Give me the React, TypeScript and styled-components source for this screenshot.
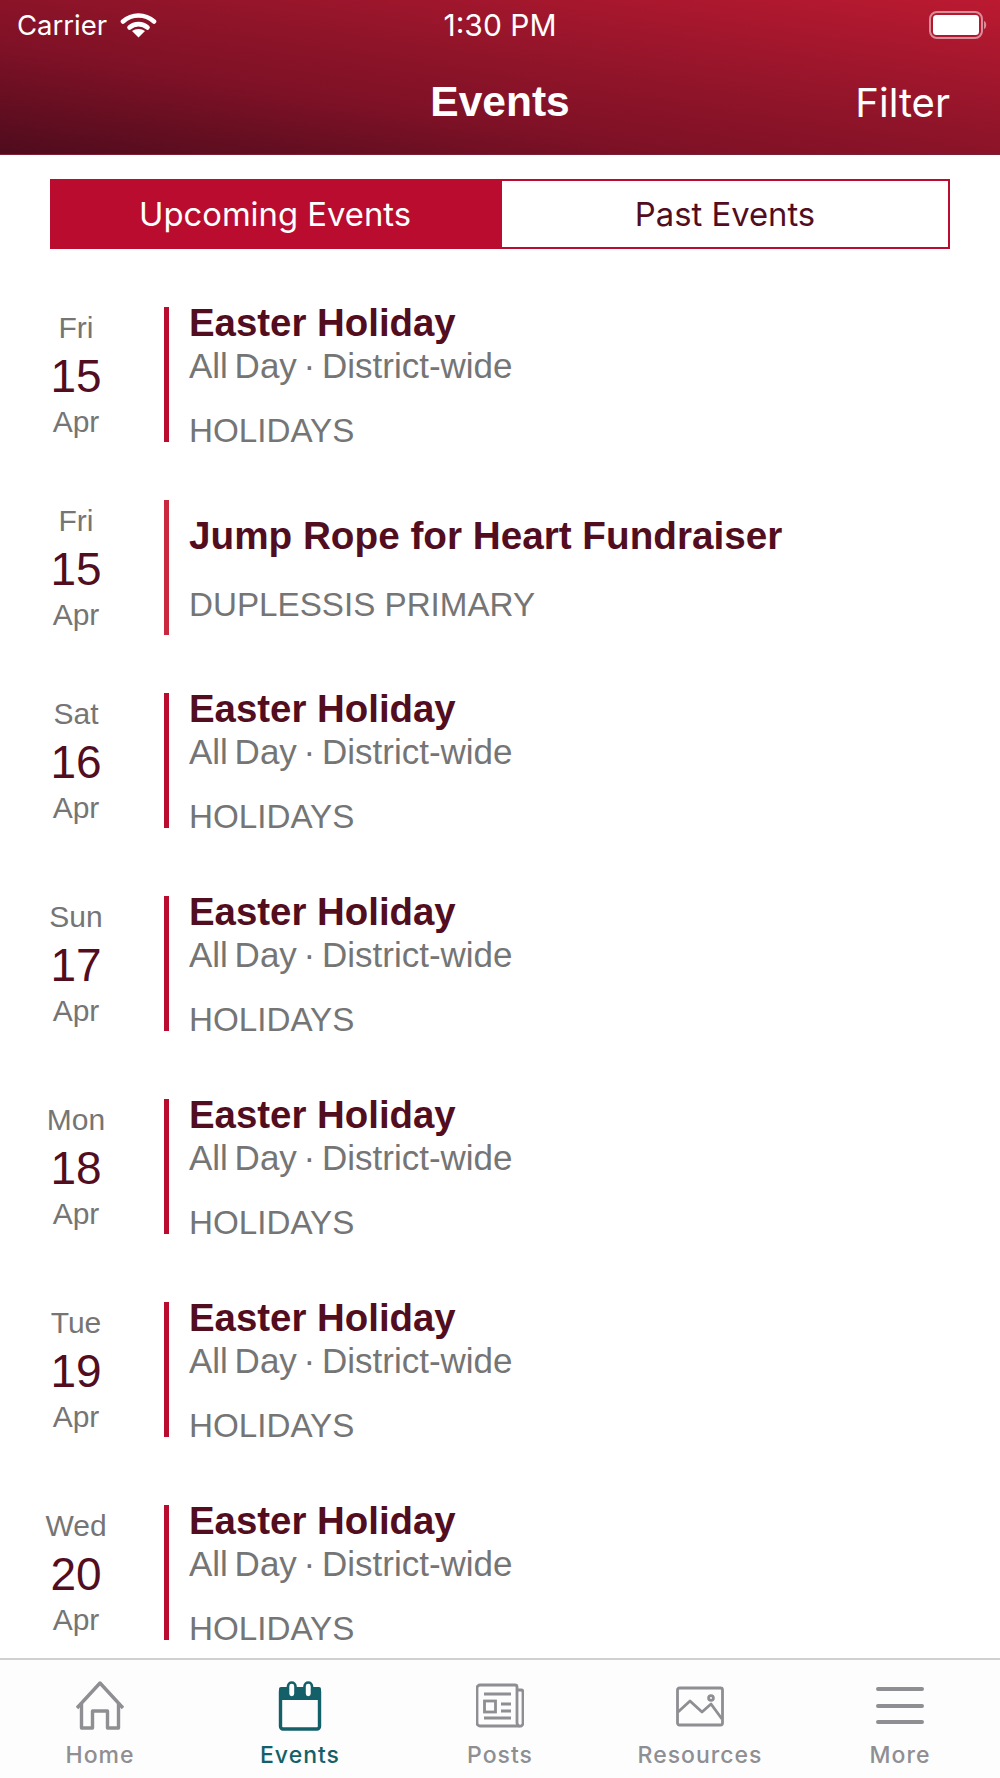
import React from "react";
import styled, { createGlobalStyle } from "styled-components";

const GlobalStyle = createGlobalStyle`
  html, body {
    margin: 0;
    padding: 0;
    background: #fff;
  }
  * {
    box-sizing: border-box;
  }
`;

const Screen = styled.div`
  width: 1000px;
  height: 1778px;
  display: flex;
  flex-direction: column;
  overflow: hidden;
  background: #fff;
`;

const Header = styled.header`
  height: 155px;
  flex: none;
  color: #fff;
  background: linear-gradient(to top right, #4e0c1d 0%, #7f1126 35%, #8f1429 55%, #bb1a31 100%);
  border-bottom: 1px solid #7d1f35;
`;

const StatusBar = styled.div`
  height: 50px;
  padding: 0 13px;
  display: grid;
  grid-template-columns: 1fr auto 1fr;
  align-items: center;
  font-family: Inter, "Liberation Sans", sans-serif;
`;

const Carrier = styled.div`
  display: flex;
  align-items: center;
  gap: 13px;
  margin-left: 4px;
  font-size: 27.5px;
`;

const Clock = styled.div`
  font-size: 30px;
`;

const Battery = styled.svg`
  justify-self: end;
`;

const NavBar = styled.div`
  height: 104px;
  padding: 0 50px;
  display: grid;
  grid-template-columns: 1fr auto 1fr;
  align-items: center;
`;

const NavTitle = styled.div`
  font-family: "Liberation Sans", sans-serif;
  font-weight: 700;
  font-size: 42.5px;
`;

const FilterLink = styled.div`
  justify-self: end;
  font-family: Inter, "Liberation Sans", sans-serif;
  font-size: 40px;
`;

const Segments = styled.div`
  margin: 24px 50px 0;
  height: 70px;
  flex: none;
  display: grid;
  grid-template-columns: 1fr 1fr;
`;

const Segment = styled.div<{ $active?: boolean }>`
  display: flex;
  align-items: center;
  justify-content: center;
  padding-bottom: 1px;
  font-family: Inter, "Liberation Sans", sans-serif;
  font-size: 32.8px;
  border: 2px solid #ba0c2f;
  background: ${({ $active }) => ($active ? "#ba0c2f" : "#fff")};
  color: ${({ $active }) => ($active ? "#fff" : "#520d1f")};
`;

const EventList = styled.div`
  flex: 1;
  min-height: 0;
  overflow: hidden;
  padding-top: 58px;
`;

const EventRow = styled.article<{ $wide?: boolean }>`
  display: flex;
  height: 135px;
  margin-bottom: ${({ $wide }) => ($wide ? "68px" : "58px")};
`;

const DateCol = styled.div`
  width: 152px;
  flex: none;
  display: flex;
  flex-direction: column;
  align-items: center;
  font-family: "Liberation Sans", sans-serif;
  color: #757575;
  font-size: 30px;
`;

const Weekday = styled.div`
  line-height: 30px;
  margin-top: 6px;
`;

const DayNumber = styled.div`
  font-size: 46px;
  line-height: 56px;
  margin-top: 5px;
  color: #520d1f;
`;

const Month = styled.div`
  line-height: 32px;
  margin-top: 2px;
`;

const Content = styled.div<{ $accent?: string }>`
  flex: 1;
  margin-left: 12px;
  padding-left: 20px;
  border-left: 5px solid ${({ $accent }) => $accent || "#ba0c2f"};
  font-family: "Liberation Sans", sans-serif;
`;

const Title = styled.div<{ $spaced?: boolean }>`
  font-weight: 700;
  font-size: ${({ $spaced }) => ($spaced ? "38.7px" : "38.4px")};
  line-height: 36px;
  color: #520d1f;
  margin-top: ${({ $spaced }) => ($spaced ? "18px" : "-2px")};
`;

const Meta = styled.div`
  font-size: 35px;
  word-spacing: -3px;
  line-height: 36px;
  margin-top: 7px;
  color: #757575;
`;

const Category = styled.div<{ $spaced?: boolean }>`
  font-size: 33.2px;
  line-height: 36px;
  margin-top: ${({ $spaced }) => ($spaced ? "33px" : "29px")};
  color: #757575;
`;

const TabBar = styled.nav`
  height: 120px;
  flex: none;
  display: grid;
  grid-template-columns: repeat(5, 1fr);
  border-top: 2px solid #d0d0d0;
  background: #fdfdfd;
`;

const Tab = styled.div<{ $active?: boolean }>`
  display: flex;
  flex-direction: column;
  align-items: center;
  padding-top: 21px;
  color: ${({ $active }) => ($active ? "#146068" : "#8e8e93")};
`;

const TabLabel = styled.div`
  margin-top: 9px;
  font-family: Inter, "Liberation Sans", sans-serif;
  font-size: 23px;
  font-weight: 500;
  letter-spacing: 1px;
  line-height: 30px;
`;

const WifiIcon = () => (
  <svg width="37" height="26" viewBox="0 0 37 26" fill="none" stroke="#fff" strokeWidth="4.6" strokeLinecap="round">
    <path d="M3 9.5C12 1.5 25 1.5 34 9.5" />
    <path d="M9.5 15.5C14.5 11 22.5 11 27.5 15.5" />
    <path d="M18.5 25.5l-6.5-6.5c3.6-2.8 9.4-2.8 13 0z" fill="#fff" stroke="none" />
  </svg>
);

const HomeIcon = () => (
  <svg width="48" height="50" viewBox="0 0 48 50" fill="none" stroke="currentColor" strokeWidth="3.4" strokeLinejoin="round">
    <path d="M1 27L24 2l23 25" />
    <path d="M5.5 23v24h11V30h15v17h11V23" />
  </svg>
);

const CalendarIcon = () => (
  <svg width="48" height="50" viewBox="0 0 48 50">
    <path d="M3 8a2 2 0 0 1 2-2h38a2 2 0 0 1 2 2v11H3z" fill="currentColor" />
    <rect x="4.5" y="8" width="39" height="40" rx="2.5" fill="none" stroke="currentColor" strokeWidth="3.4" />
    <rect x="12" y="1.5" width="7.5" height="15" rx="3.75" fill="#fff" stroke="currentColor" strokeWidth="2.6" />
    <rect x="28.5" y="1.5" width="7.5" height="15" rx="3.75" fill="#fff" stroke="currentColor" strokeWidth="2.6" />
  </svg>
);

const PostsIcon = () => (
  <svg width="48" height="50" viewBox="0 0 48 50" fill="none" stroke="currentColor" strokeWidth="2.8">
    <path d="M41 6v36a4 4 0 0 0 2 3H4a3 3 0 0 1-3-3V7a3 3 0 0 1 3-3h35a2 2 0 0 1 2 2z" strokeLinejoin="round" />
    <path d="M41 9h4a2 2 0 0 1 2 2v31a3 3 0 0 1-4 3" />
    <path d="M8 13h27M8 37h27M25 23h10M25 30h10" />
    <rect x="8.5" y="20" width="11" height="11" />
  </svg>
);

const ImageIcon = () => (
  <svg width="48" height="50" viewBox="0 0 48 50" fill="none" stroke="currentColor" strokeWidth="2.8" strokeLinejoin="round">
    <rect x="1.5" y="7" width="45" height="37" rx="2" />
    <path d="M2 31l12-11 12 11 9-8 11 15" />
    <circle cx="35" cy="17" r="2.4" />
  </svg>
);

const MoreIcon = () => (
  <svg width="48" height="50" viewBox="0 0 48 50" fill="none" stroke="currentColor" strokeWidth="4" strokeLinecap="round">
    <path d="M2 8h44M2 25h44M2 41h44" />
  </svg>
);

const tabs = [
  { label: "Home", icon: <HomeIcon /> },
  { label: "Events", icon: <CalendarIcon />, active: true },
  { label: "Posts", icon: <PostsIcon /> },
  { label: "Resources", icon: <ImageIcon /> },
  { label: "More", icon: <MoreIcon /> },
];

const events = [
  { weekday: "Fri", day: 15, title: "Easter Holiday", meta: "All Day · District-wide", category: "HOLIDAYS" },
  { weekday: "Fri", day: 15, title: "Jump Rope for Heart Fundraiser", category: "DUPLESSIS PRIMARY", accent: "#c9283e" },
  { weekday: "Sat", day: 16, title: "Easter Holiday", meta: "All Day · District-wide", category: "HOLIDAYS", wide: true },
  { weekday: "Sun", day: 17, title: "Easter Holiday", meta: "All Day · District-wide", category: "HOLIDAYS", wide: true },
  { weekday: "Mon", day: 18, title: "Easter Holiday", meta: "All Day · District-wide", category: "HOLIDAYS", wide: true },
  { weekday: "Tue", day: 19, title: "Easter Holiday", meta: "All Day · District-wide", category: "HOLIDAYS", wide: true },
  { weekday: "Wed", day: 20, title: "Easter Holiday", meta: "All Day · District-wide", category: "HOLIDAYS", wide: true },
];

const App: React.FC = () => (
  <Screen>
    <GlobalStyle />
    <Header>
      <StatusBar>
        <Carrier>
          Carrier
          <WifiIcon />
        </Carrier>
        <Clock>1:30 PM</Clock>
        <Battery width="58" height="28" viewBox="0 0 58 28" fill="none">
          <rect x="1" y="1" width="52" height="26" rx="7" stroke="#fff" strokeOpacity=".5" strokeWidth="2" />
          <rect x="4" y="4" width="46" height="20" rx="3.5" fill="#fff" />
          <path d="M55 10c3 1 3 7 0 8z" fill="#fff" fillOpacity=".5" />
        </Battery>
      </StatusBar>
      <NavBar>
        <div />
        <NavTitle>Events</NavTitle>
        <FilterLink>Filter</FilterLink>
      </NavBar>
    </Header>

    <Segments>
      <Segment $active>Upcoming Events</Segment>
      <Segment>Past Events</Segment>
    </Segments>

    <EventList>
      {events.map((ev, i) => (
        <EventRow key={i} $wide={ev.wide}>
          <DateCol>
            <Weekday>{ev.weekday}</Weekday>
            <DayNumber>{ev.day}</DayNumber>
            <Month>Apr</Month>
          </DateCol>
          <Content $accent={ev.accent}>
            <Title $spaced={!ev.meta}>{ev.title}</Title>
            {ev.meta ? <Meta>{ev.meta}</Meta> : null}
            <Category $spaced={!ev.meta}>{ev.category}</Category>
          </Content>
        </EventRow>
      ))}
    </EventList>

    <TabBar>
      {tabs.map((tab) => (
        <Tab key={tab.label} $active={tab.active}>
          {tab.icon}
          <TabLabel>{tab.label}</TabLabel>
        </Tab>
      ))}
    </TabBar>
  </Screen>
);

export default App;
